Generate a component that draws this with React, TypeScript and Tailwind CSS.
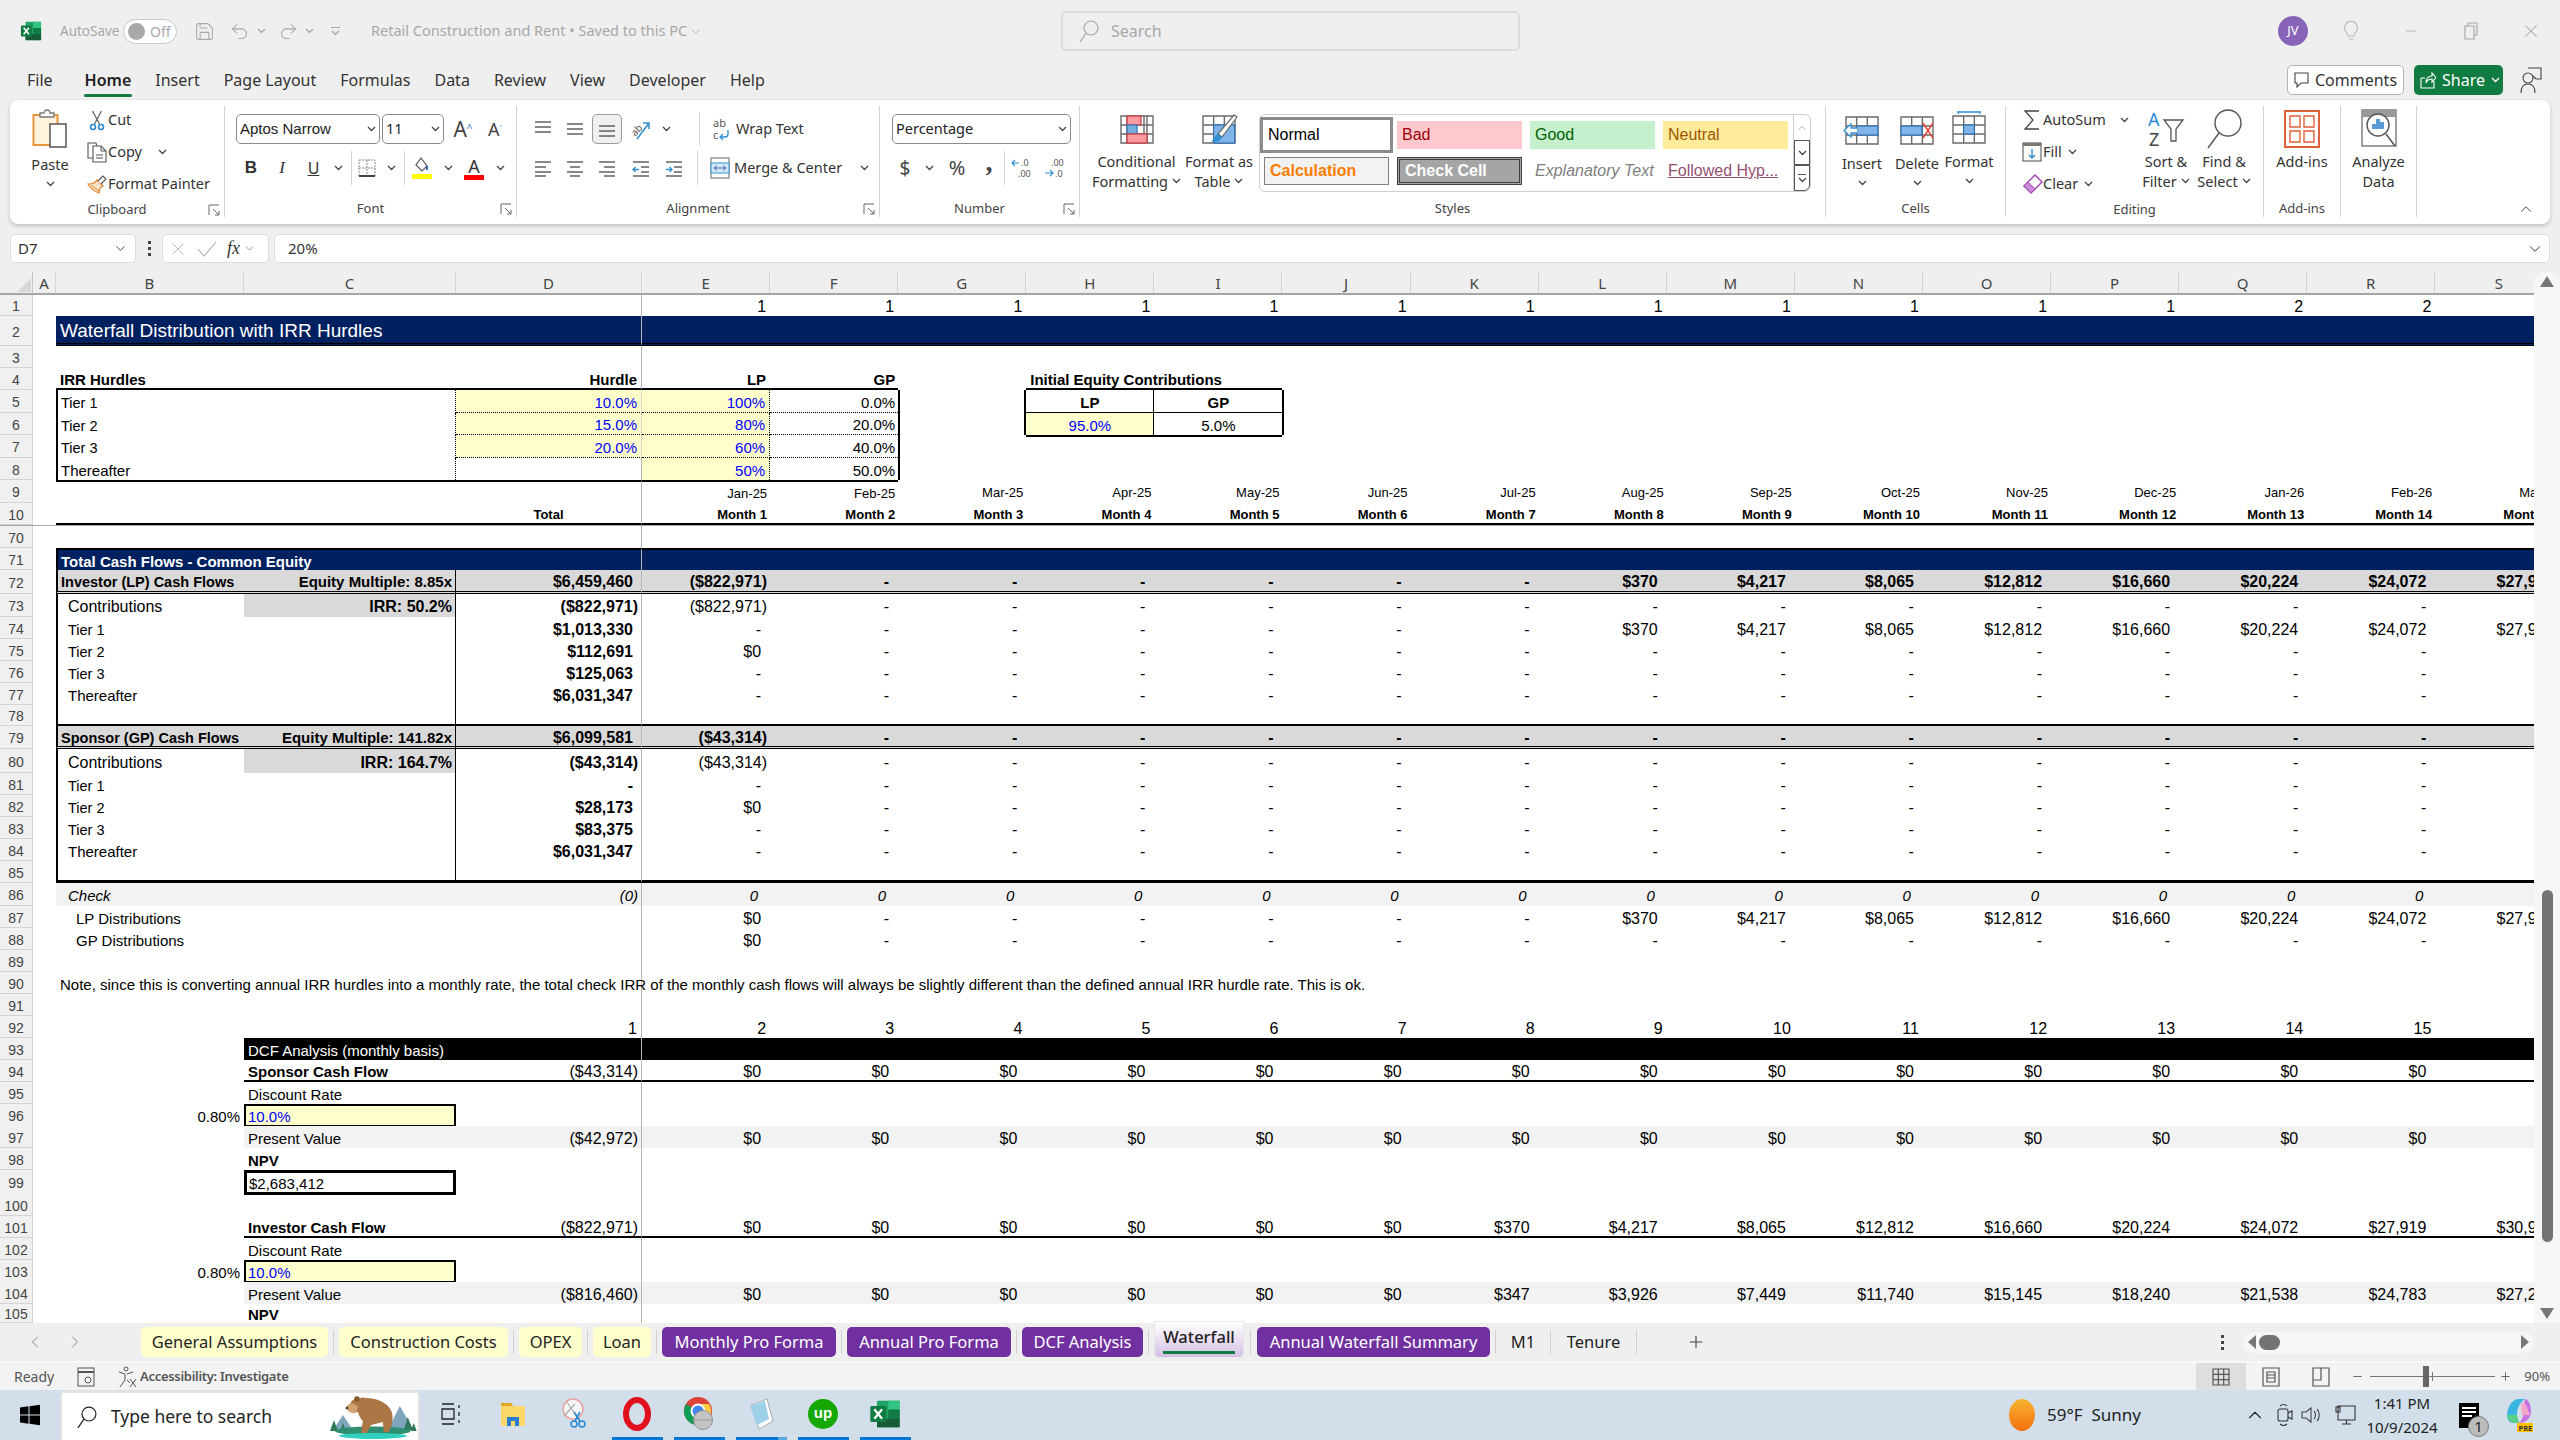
import type { ReactNode } from 'react';
import clsx from 'clsx';
import { ChevronDown, ChevronLeft, ChevronRight, ChevronUp, Minus, Plus, Redo2, Save, Undo2, X } from 'lucide-react';

const COLS = ['A', 'B', 'C', 'D', 'E', 'F', 'G', 'H', 'I', 'J', 'K', 'L', 'M', 'N', 'O', 'P', 'Q', 'R', 'S'] as const;
type Col = (typeof COLS)[number];
type Cell = { t?: string; c?: string };
type Cells = Partial<Record<Col, Cell>>;
type Row = { n: string; h: string; cells: Cells; wrap?: string };

const GRID = 'grid grid-cols-[33px_23px_188px_212px_186px_repeat(15,128.1px)]';

const across = (from: Col, c: string, to: Col = 'S'): Cells => {
    const out: Cells = {};
    COLS.slice(COLS.indexOf(from), COLS.indexOf(to) + 1).forEach((k) => { out[k] = { c }; });
    return out;
};
const vals = (from: Col, values: string[], c: string): Cells => {
    const out: Cells = {};
    values.forEach((t, i) => { out[COLS[COLS.indexOf(from) + i]] = { t, c }; });
    return out;
};
const merge = (...parts: Cells[]): Cells => {
    const out: Cells = {};
    parts.forEach((p) => {
        (Object.keys(p) as Col[]).forEach((k) => {
            out[k] = { t: p[k]?.t ?? out[k]?.t, c: `${out[k]?.c ?? ''} ${p[k]?.c ?? ''}` };
        });
    });
    return out;
};
const rep = (n: number, t: string) => Array.from({ length: n }, () => t);

const NUM = 'justify-end pr-[9px]';
const PAREN = 'justify-end pr-[3px]';
const TOT = 'justify-end pr-[8px] font-bold';
const HIGH = 'bg-[#ffffcc] text-[#0000ff]';
const BOXED = { B: { c: 'border-l-2 border-black' }, C: { c: 'border-r border-black' } };

const months = ['Jan-25', 'Feb-25', 'Mar-25', 'Apr-25', 'May-25', 'Jun-25', 'Jul-25', 'Aug-25', 'Sep-25', 'Oct-25', 'Nov-25', 'Dec-25', 'Jan-26', 'Feb-26', 'Mar-26'];
const monthNames = Array.from({ length: 15 }, (_, i) => `Month ${i + 1}`);
const paid = ['$370', '$4,217', '$8,065', '$12,812', '$16,660', '$20,224', '$24,072', '$27,919'];

const labelSize = (label: string) => {
    if (label === 'Contributions') return 'text-[16px]';
    if (label.startsWith('Tier')) return 'text-[14.5px]';
    return 'text-[15px]';
};

const hurdle = (n: string, h: string, label: string, d: string, e: string, f: string, last = false): Row => ({
    n, h,
    cells: merge(
        { B: { t: label, c: `border-l-2 border-black pl-[3px] ${labelSize(label)}` } },
        { C: { c: 'border-r border-dotted border-black' } },
        { D: { t: d, c: `justify-end pr-[4px] text-[15px] ${d ? HIGH : ''} ${last ? '' : 'border-b border-dotted border-black'}` } },
        { E: { t: e, c: `justify-end pr-[4px] text-[15px] border-r border-dotted border-black ${HIGH} ${last ? '' : 'border-b'}` } },
        { F: { t: f, c: `justify-end pr-[3px] text-[15px] ${last ? '' : 'border-b border-dotted border-black'}` } },
        { G: { c: 'border-l-2 border-black' } },
    ),
});

const flowRow = (n: string, h: string, label: string, total: string, e: string, rest: string[] = [], paren = false, extra: Cells = {}): Row => ({
    n, h,
    cells: merge(
        BOXED,
        { B: { t: label, c: `pl-[10px] z-10 ${labelSize(label)}` } },
        { D: { t: total, c: paren ? `${PAREN} font-bold` : TOT } },
        { E: { t: e, c: e.startsWith('(') ? PAREN : NUM } },
        vals('F', rest.length ? rest : rep(14, '-'), NUM),
        extra,
    ),
});

const headRow = (n: string, h: string, label: string, multiple: string, total: string, e: string, rest: string[]): Row => ({
    n, h,
    cells: merge(
        across('B', 'bg-[#d9d9d9] font-bold border-b-[3px] border-double border-black'),
        { B: { t: label, c: 'border-l-2 text-[14.5px] pl-[3px] z-10' } },
        { C: { t: multiple, c: 'justify-end pr-[3px] text-[15px] border-r' } },
        { D: { t: total, c: 'justify-end pr-[8px]' } },
        { E: { t: e, c: PAREN } },
        vals('F', rest, NUM),
    ),
});

const ROWS: Row[] = [
    { n: '1', h: 'h-[21px]', cells: vals('E', [...rep(12, '1'), '2', '2', '2'], 'justify-end pr-[4px]') },
    { n: '2', h: 'h-[30px]', cells: merge(across('B', 'bg-[#002060] border-b-[3px] border-double border-black'), { B: { t: 'Waterfall Distribution with IRR Hurdles', c: 'text-white text-[19px] pl-[4px] z-10' } }) },
    { n: '3', h: 'h-[22px]', cells: {} },
    {
        n: '4', h: 'h-[22px]', cells: merge(
            across('B', 'border-b-2 border-black', 'F'),
            across('H', 'border-b-2 border-black', 'I'),
            { B: { t: 'IRR Hurdles', c: 'font-bold text-[15px] pl-[4px] z-10' } },
            { D: { t: 'Hurdle', c: 'justify-end pr-[4px] font-bold text-[15px]' } },
            { E: { t: 'LP', c: 'justify-end pr-[4px] font-bold text-[15px]' } },
            { F: { t: 'GP', c: 'justify-end pr-[3px] font-bold text-[15px]' } },
            { H: { t: 'Initial Equity Contributions', c: 'font-bold text-[15px] pl-[4px] z-10' } },
        ),
    },
    (() => {
        const r = hurdle('5', 'h-[23px]', 'Tier 1', '10.0%', '100%', '0.0%');
        r.cells = merge(r.cells, { G: { c: 'border-r-2' } }, {
            H: { t: 'LP', c: 'justify-center font-bold text-[15px] border-r border-b border-black' },
            I: { t: 'GP', c: 'justify-center font-bold text-[15px] border-b border-black' },
            J: { c: 'border-l-2 border-black' },
        });
        return r;
    })(),
    (() => {
        const r = hurdle('6', 'h-[22px]', 'Tier 2', '15.0%', '80%', '20.0%');
        r.cells = merge(r.cells, { G: { c: 'border-r-2' } }, {
            H: { t: '95.0%', c: `justify-center text-[15px] border-r border-black ${HIGH}` },
            I: { t: '5.0%', c: 'justify-center text-[15px]' },
            J: { c: 'border-l-2 border-black' },
        });
        return r;
    })(),
    (() => {
        const r = hurdle('7', 'h-[23px]', 'Tier 3', '20.0%', '60%', '40.0%');
        r.cells = merge(r.cells, across('H', 'border-t-2 border-black', 'I'));
        return r;
    })(),
    hurdle('8', 'h-[22px]', 'Thereafter', '', '50%', '50.0%', true),
    { n: '9', h: 'h-[23px]', cells: merge(across('B', 'border-t-2 border-black', 'F'), vals('E', months, 'justify-end pr-[3px] text-[13px]')) },
    {
        n: '10', h: 'h-[22px]', cells: merge(
            across('B', 'border-b-2 border-black'),
            { D: { t: 'Total', c: 'justify-center font-bold text-[13px]' } },
            vals('E', monthNames, 'justify-end pr-[3px] font-bold text-[13px]'),
        ),
    },
    { n: '70', h: 'h-[23px]', wrap: 'border-t border-[#a8a8a8]', cells: {} },
    { n: '71', h: 'h-[22px]', cells: merge(across('B', 'bg-[#002060] border-t-2 border-black'), { B: { t: 'Total Cash Flows - Common Equity', c: 'border-l-2 text-white font-bold text-[15px] pl-[3px] z-10' } }) },
    headRow('72', 'h-[24px]', 'Investor (LP) Cash Flows', 'Equity Multiple: 8.85x', '$6,459,460', '($822,971)', [...rep(6, '-'), ...paid]),
    flowRow('73', 'h-[23px]', 'Contributions', '($822,971)', '($822,971)', [], true, { C: { t: 'IRR: 50.2%', c: 'bg-[#d9d9d9] justify-end pr-[3px] font-bold' } }),
    flowRow('74', 'h-[22px]', 'Tier 1', '$1,013,330', '-', [...rep(6, '-'), ...paid]),
    flowRow('75', 'h-[22px]', 'Tier 2', '$112,691', '$0'),
    flowRow('76', 'h-[22px]', 'Tier 3', '$125,063', '-'),
    flowRow('77', 'h-[22px]', 'Thereafter', '$6,031,347', '-'),
    { n: '78', h: 'h-[21px]', cells: merge(across('B', 'border-b-2 border-black'), BOXED) },
    headRow('79', 'h-[23px]', 'Sponsor (GP) Cash Flows', 'Equity Multiple: 141.82x', '$6,099,581', '($43,314)', rep(14, '-')),
    flowRow('80', 'h-[24px]', 'Contributions', '($43,314)', '($43,314)', [], true, { C: { t: 'IRR: 164.7%', c: 'bg-[#d9d9d9] justify-end pr-[3px] font-bold' } }),
    flowRow('81', 'h-[22px]', 'Tier 1', '-', '-'),
    flowRow('82', 'h-[22px]', 'Tier 2', '$28,173', '$0'),
    flowRow('83', 'h-[22px]', 'Tier 3', '$83,375', '-'),
    flowRow('84', 'h-[22px]', 'Thereafter', '$6,031,347', '-'),
    { n: '85', h: 'h-[22px]', cells: merge(across('B', 'border-b-[3px] border-black'), BOXED) },
    {
        n: '86', h: 'h-[23px]', cells: merge(
            across('B', 'bg-[#f2f2f2] italic'),
            { B: { t: 'Check', c: 'text-[15px] pl-[12px] z-10' } },
            { D: { t: '(0)', c: 'justify-end pr-[3px] text-[15px]' } },
            vals('E', rep(15, '0'), 'justify-end pr-[12px] text-[15px]'),
        ),
    },
    { n: '87', h: 'h-[22px]', cells: merge({ B: { t: 'LP Distributions', c: 'text-[15px] pl-[20px] z-10' } }, vals('E', ['$0', ...rep(6, '-'), ...paid], NUM)) },
    { n: '88', h: 'h-[22px]', cells: merge({ B: { t: 'GP Distributions', c: 'text-[15px] pl-[20px] z-10' } }, vals('E', ['$0', ...rep(14, '-')], NUM)) },
    { n: '89', h: 'h-[22px]', cells: {} },
    { n: '90', h: 'h-[22px]', cells: { B: { t: 'Note, since this is converting annual IRR hurdles into a monthly rate, the total check IRR of the monthly cash flows will always be slightly different than the defined annual IRR hurdle rate. This is ok.', c: 'text-[15px] pl-[4px] z-10' } } },
    { n: '91', h: 'h-[22px]', cells: {} },
    { n: '92', h: 'h-[22px]', cells: vals('D', Array.from({ length: 16 }, (_, i) => String(i + 1)), 'justify-end pr-[4px]') },
    { n: '93', h: 'h-[22px]', cells: merge(across('C', 'bg-black'), { C: { t: 'DCF Analysis (monthly basis)', c: 'text-white text-[15px] pl-[4px]' } }) },
    {
        n: '94', h: 'h-[22px]', cells: merge(
            across('C', 'border-b-2 border-black'),
            { C: { t: 'Sponsor Cash Flow', c: 'font-bold text-[15px] pl-[4px]' } },
            { D: { t: '($43,314)', c: PAREN } },
            vals('E', rep(15, '$0'), NUM),
        ),
    },
    { n: '95', h: 'h-[22px]', cells: { C: { t: 'Discount Rate', c: 'text-[15px] pl-[4px]' } } },
    { n: '96', h: 'h-[22px]', cells: { B: { t: '0.80%', c: 'justify-end pr-[4px] text-[15px]' }, C: { t: '10.0%', c: `text-[15px] pl-[2px] border-2 border-black ${HIGH}` } } },
    {
        n: '97', h: 'h-[22px]', cells: merge(
            across('C', 'bg-[#f2f2f2]'),
            { C: { t: 'Present Value', c: 'text-[15px] pl-[4px]' } },
            { D: { t: '($42,972)', c: PAREN } },
            vals('E', rep(15, '$0'), NUM),
        ),
    },
    { n: '98', h: 'h-[22px]', cells: { C: { t: 'NPV', c: 'font-bold text-[15px] pl-[4px]' } } },
    { n: '99', h: 'h-[24px]', cells: { C: { t: '$2,683,412', c: 'text-[15px] pl-[2px] border-[3px] border-black' } } },
    { n: '100', h: 'h-[22px]', cells: {} },
    {
        n: '101', h: 'h-[22px]', cells: merge(
            across('C', 'border-b-2 border-black'),
            { C: { t: 'Investor Cash Flow', c: 'font-bold text-[15px] pl-[4px]' } },
            { D: { t: '($822,971)', c: PAREN } },
            vals('E', [...rep(6, '$0'), ...paid, '$30,978'], NUM),
        ),
    },
    { n: '102', h: 'h-[22px]', cells: { C: { t: 'Discount Rate', c: 'text-[15px] pl-[4px]' } } },
    { n: '103', h: 'h-[22px]', cells: { B: { t: '0.80%', c: 'justify-end pr-[4px] text-[15px]' }, C: { t: '10.0%', c: `text-[15px] pl-[2px] border-2 border-black ${HIGH}` } } },
    {
        n: '104', h: 'h-[22px]', cells: merge(
            across('C', 'bg-[#f2f2f2]'),
            { C: { t: 'Present Value', c: 'text-[15px] pl-[4px]' } },
            { D: { t: '($816,460)', c: PAREN } },
            vals('E', [...rep(6, '$0'), '$347', '$3,926', '$7,449', '$11,740', '$15,145', '$18,240', '$21,538', '$24,783', '$27,243'], NUM),
        ),
    },
    { n: '105', h: 'h-[19px]', cells: { C: { t: 'NPV', c: 'font-bold text-[15px] pl-[4px]' } } },
];

/* ---------- small drawings ---------- */

function ExcelLogo({ size = 22 }: { size?: number }) {
    return (
        <svg width={size} height={size} viewBox="0 0 24 24">
            <rect x="6" y="2" width="17" height="20" rx="1" fill="#21a366" />
            <rect x="14.5" y="2" width="8.5" height="6.700" fill="#33c481" />
            <rect x="14.5" y="8.700" width="8.5" height="6.700" fill="#107c41" />
            <rect x="6" y="15.400" width="17" height="6.600" fill="#185c37" />
            <rect x="1" y="6" width="12" height="12" rx="1" fill="#107c41" />
            <path d="M4 8.500l5.800 7M9.800 8.500l-5.800 7" stroke="#fff" strokeWidth="1.700" />
        </svg>
    );
}

function Chev({ className = 'text-[#444]' }: { className?: string }) {
    return (
        <svg width="9" height="6" viewBox="0 0 9 6" className={className}>
            <path d="M1 1l3.500 3.500L8 1" fill="none" stroke="currentColor" strokeWidth="1.300" />
        </svg>
    );
}

function Lines({ lines, accent }: { lines: [number, number, number][]; accent?: ReactNode }) {
    return (
        <svg width="20" height="20" viewBox="0 0 20 20">
            {lines.map(([a, b, y]) => <path key={y} d={`M${a} ${y}H${b}`} stroke="#555" strokeWidth="1.400" />)}
            {accent}
        </svg>
    );
}

function TableGrid({ fills = [], extra, cols = [14.67, 25.33] }: { fills?: [number, number, number, number, string, string?][]; extra?: ReactNode; cols?: number[] }) {
    return (
        <svg width="40" height="36" viewBox="0 0 40 36">
            <rect x="4" y="5" width="32" height="27" fill="#fff" />
            <path d={`M4 5h32v27H4z${cols.map((x) => `M${x} 5v27`).join('')}M4 14h32M4 23h32`} fill="none" stroke="#6a6a6a" strokeWidth="1.400" />
            {fills.map(([x, y, w, h, f, s]) => <rect key={`${x}-${y}`} x={x} y={y} width={w} height={h} fill={f} stroke={s} strokeWidth="1.200" />)}
            {extra}
        </svg>
    );
}

function Bear() {
    return (
        <svg width="90" height="46" viewBox="0 0 90 46">
            <path d="M5 36l10-15 10 15zM60 36l12-24 14 24z" fill="#7fa6bd" />
            <path d="M2 37l4-11 4 11zM12 37l3-8 3 8zM76 36l4-13 5 13zM83 37l3-8 3 8z" fill="#2e7a5a" />
            <ellipse cx="45" cy="37" rx="38" ry="4.500" fill="#2f8f72" />
            <ellipse cx="45" cy="42" rx="34" ry="3" fill="#2fd0bf" />
            <path d="M22 11c1-5 5-7 9-6 2-2 5-2 7-1 10 0 22 4 26 14 1 4 1 9 0 13l-3 7h-5l-1-10-12 3-4 8h-6l2-12c-3-3-4-6-5-9-3 0-7-2-8-7z" fill="#ad7645" />
            <path d="M18 14c1-3 3-4 6-5l6 3-2 7c-4 1-8-1-10-5z" fill="#d0a273" />
            <circle cx="29" cy="5" r="2.800" fill="#8a5a31" />
            <circle cx="19" cy="14" r="1.300" fill="#333" />
        </svg>
    );
}

/* ---------- ribbon pieces ---------- */

function Slot({ w, children }: { w: string; children?: ReactNode }) {
    return <div className={clsx('flex items-center justify-center h-[30px]', w)}>{children}</div>;
}

function Big({ icon, lines, chev = true, w, drop }: { icon: ReactNode; lines: string[]; chev?: boolean; w: string; drop?: boolean }) {
    return (
        <div className={clsx('flex flex-col items-center shrink-0 text-[14.5px] leading-[20px] text-[#333]', w)}>
            <div className={clsx('mt-[1px] flex items-center justify-center', drop ? 'h-[46px]' : 'h-[44px]')}>{icon}</div>
            {lines.map((l, i) => (
                <div key={l} className="flex items-center gap-[4px] whitespace-nowrap">
                    {l}
                    {chev && i === lines.length - 1 && lines.length > 1 && <Chev />}
                </div>
            ))}
            {chev && lines.length === 1 && <div className="h-[20px] flex items-center"><Chev /></div>}
        </div>
    );
}

function Group({ w, label, launcher, children }: { w: string; label?: string; launcher?: boolean; children: ReactNode }) {
    return (
        <div className={clsx('h-[111px] mt-[6px] shrink-0 border-r border-[#d5d5d5] flex flex-col', w)}>
            <div className="h-[97px] flex">{children}</div>
            <div className="h-[18px] grid grid-cols-[1fr_auto_1fr] items-center text-[13px] text-[#444]">
                <span />
                <span>{label}</span>
                {launcher && (
                    <svg width="12" height="12" viewBox="0 0 12 12" className="justify-self-end mr-[4px]">
                        <path d="M1 11V1h10M5 5l6 6M11 7v4H7" fill="none" stroke="#666" strokeWidth="1" />
                    </svg>
                )}
            </div>
        </div>
    );
}

function Small({ icon, text, chev, gap = 'ml-[9px]' }: { icon: ReactNode; text: string; chev?: boolean; gap?: string }) {
    return (
        <div className="flex items-center h-[32px] text-[14.5px] text-[#333] whitespace-nowrap">
            <span className="w-[22px] flex justify-center">{icon}</span>
            <span>{text}</span>
            {chev && <span className={gap}><Chev /></span>}
        </div>
    );
}

function Sep({ className }: { className?: string }) {
    return <span className={clsx('w-px h-[34px] bg-[#d5d5d5] shrink-0', className)} />;
}

function StyleBox({ children, c }: { children: ReactNode; c: string }) {
    return <div className={clsx('flex items-center pl-[5px] shrink-0 text-[16px] font-[Liberation_Sans,Arial,sans-serif]', c)}>{children}</div>;
}

function Ribbon() {
    return (
        <div className="mx-[10px] h-[124px] rounded-[8px] bg-white shadow-[0_2px_4px_rgba(0,0,0,0.2)] flex">
            <Group w="w-[215px]" label="Clipboard" launcher>
                <div className="ml-[10px] w-[60px] flex flex-col items-center text-[14.5px] text-[#333]">
                    <svg width="36" height="40" viewBox="0 0 36 40" className="mt-[3px]">
                        <rect x="1.500" y="6" width="24" height="30" fill="#fff3dc" stroke="#e8963a" strokeWidth="2" />
                        <path d="M8 8V4h4a3 3 0 016 0h4v4z" fill="#fff" stroke="#777" strokeWidth="1.300" />
                        <rect x="18" y="15" width="16" height="23" fill="#fff" stroke="#555" strokeWidth="1.500" />
                    </svg>
                    <span className="mt-[5px]">Paste</span>
                    <span className="mt-[5px]"><Chev /></span>
                </div>
                <div className="ml-[6px] -mt-[2px]">
                    <Small text="Cut" icon={<svg width="16" height="21" viewBox="0 0 16 21"><path d="M3.500 1l7 13M12.500 1l-7 13" stroke="#555" strokeWidth="1.100" /><circle cx="4" cy="17" r="2.500" fill="none" stroke="#2b88d8" strokeWidth="1.500" /><circle cx="12" cy="17" r="2.500" fill="none" stroke="#2b88d8" strokeWidth="1.500" /></svg>} />
                    <Small text="Copy" chev gap="ml-[16px]" icon={<svg width="20" height="22" viewBox="0 0 20 22"><path d="M7 17H1V2h8l1 3" fill="#fff" stroke="#555" strokeWidth="1.100" /><path d="M6 5h8l5 5v11H6z" fill="#fff" stroke="#555" strokeWidth="1.100" /><path d="M14 5v5h5M9 14h7M9 17h7" fill="none" stroke="#555" strokeWidth="1" /></svg>} />
                    <Small text="Format Painter" icon={<svg width="21" height="20" viewBox="0 0 21 20"><path d="M1 10c5 0 8-2 9-4l6 6c-2 1-4 4-4 7-4-1-9-5-11-9z" fill="#fbe3c8" stroke="#e8832f" strokeWidth="1.200" /><path d="M11 7l5-5 3 3-5 5" fill="#fff" stroke="#555" strokeWidth="1.100" /><path d="M4 11l8 6" stroke="#e8832f" strokeWidth="1" /></svg>} />
                </div>
            </Group>

            <Group w="w-[292px]" label="Font" launcher>
                <div className="flex flex-col pl-[11px] pt-[8px] gap-[9px]">
                    <div className="flex items-center h-[30px]">
                        <div className="w-[144px] h-[30px] border border-[#8a8a8a] rounded-[5px] flex items-center justify-between px-[3px] text-[15px] text-[#222] font-[Liberation_Sans,Arial,sans-serif]">Aptos Narrow<Chev /></div>
                        <div className="w-[62px] ml-[2px] h-[30px] border border-[#8a8a8a] rounded-[5px] flex items-center justify-between px-[3px] text-[14.5px] text-[#222]">11<Chev /></div>
                        <span className="ml-[6px] w-[26px] text-[21px] leading-none text-[#444] text-center">A<sup className="text-[10px] text-[#2f6fb5]">^</sup></span>
                        <span className="ml-[6px] w-[26px] text-[18px] leading-none text-[#444] text-center">A<sup className="text-[9px] text-[#2f6fb5]">˅</sup></span>
                    </div>
                    <div className="flex items-center h-[30px] text-[#333]">
                        <Slot w="w-[30px]"><b className="text-[17px] font-[Liberation_Sans,sans-serif]">B</b></Slot>
                        <Slot w="w-[32px]"><i className="text-[17px] font-[Liberation_Serif,serif]">I</i></Slot>
                        <Slot w="w-[31px]"><u className="text-[16px]">U</u></Slot>
                        <Slot w="w-[18px]"><Chev /></Slot>
                        <Sep className="ml-[4px]" />
                        <Slot w="w-[30px]">
                            <svg width="20" height="20" viewBox="0 0 20 20"><path d="M2 2h16v16H2zM10 2v16M2 10h16" fill="none" stroke="#888" strokeWidth="1" strokeDasharray="2 1" /><path d="M2 18h16" stroke="#444" strokeWidth="2" /></svg>
                        </Slot>
                        <Slot w="w-[18px]"><Chev /></Slot>
                        <Sep className="ml-[4px]" />
                        <Slot w="w-[34px]">
                            <svg width="22" height="24" viewBox="0 0 22 24"><path d="M10 2l6 8-5 5-6-6z" fill="#fff" stroke="#555" strokeWidth="1.200" /><path d="M16 10v4" stroke="#2f6fb5" strokeWidth="2" /><rect x="1" y="18" width="20" height="5" fill="#ffff00" /></svg>
                        </Slot>
                        <Slot w="w-[18px]"><Chev /></Slot>
                        <Slot w="w-[34px]">
                            <div className="flex flex-col items-center leading-[18px] text-[18px]">A<span className="w-[20px] h-[5px] bg-[#ff0000]" /></div>
                        </Slot>
                        <Slot w="w-[18px]"><Chev /></Slot>
                    </div>
                </div>
            </Group>

            <Group w="w-[363px]" label="Alignment" launcher>
                <div className="flex flex-col pl-[10px] pt-[8px] gap-[9px]">
                    <div className="flex items-center h-[30px]">
                        <Slot w="w-[32px]"><Lines lines={[[2, 18, 3], [2, 18, 8], [2, 18, 13]]} /></Slot>
                        <Slot w="w-[32px]"><Lines lines={[[2, 18, 5], [2, 18, 10], [2, 18, 15]]} /></Slot>
                        <Slot w="w-[32px]"><span className="w-[30px] h-[30px] rounded-[5px] bg-[#f0f0f0] border border-[#9a9a9a] flex items-center justify-center"><Lines lines={[[2, 18, 7], [2, 18, 12], [2, 18, 17]]} /></span></Slot>
                        <Slot w="w-[35px]">
                            <svg width="24" height="24" viewBox="0 0 24 24" className="overflow-visible"><text x="1" y="16" fontSize="10" fill="#555" transform="rotate(-45 8 12)">ab</text><path d="M8 22L20 6M14 6h6v6" fill="none" stroke="#2f8fd0" strokeWidth="1.500" /></svg>
                        </Slot>
                        <Slot w="w-[16px]"><Chev /></Slot>
                        <Sep className="ml-[25px]" />
                        <div className="ml-[12px] flex items-center text-[14.5px] text-[#333] gap-[4px]">
                            <svg width="20" height="24" viewBox="0 0 20 24" className="overflow-visible"><text x="1" y="10" fontSize="11" fill="#555">ab</text><text x="1" y="22" fontSize="11" fill="#555">c</text><path d="M16 13v4a3 3 0 01-3 3H9m2-3l-3 3 3 3" fill="none" stroke="#2f8fd0" strokeWidth="1.300" /></svg>
                            Wrap Text
                        </div>
                    </div>
                    <div className="flex items-center h-[30px]">
                        <Slot w="w-[32px]"><Lines lines={[[2, 18, 4], [2, 13, 9], [2, 18, 14], [2, 13, 18]]} /></Slot>
                        <Slot w="w-[32px]"><Lines lines={[[2, 18, 4], [5, 15, 9], [2, 18, 14], [5, 15, 18]]} /></Slot>
                        <Slot w="w-[32px]"><Lines lines={[[2, 18, 4], [7, 18, 9], [2, 18, 14], [7, 18, 18]]} /></Slot>
                        <Slot w="w-[35px]"><Lines lines={[[2, 18, 4], [10, 18, 9], [10, 18, 14], [2, 18, 18]]} accent={<path d="M8 11.500H2m2.500-2.500L2 11.500 4.500 14" fill="none" stroke="#2f8fd0" strokeWidth="1.300" />} /></Slot>
                        <Slot w="w-[32px]"><Lines lines={[[2, 18, 4], [10, 18, 9], [10, 18, 14], [2, 18, 18]]} accent={<path d="M2 11.500h6m-2.500-2.500L8 11.500 5.500 14" fill="none" stroke="#2f8fd0" strokeWidth="1.300" />} /></Slot>
                        <Sep className="ml-[7px]" />
                        <div className="ml-[12px] flex items-center text-[14.5px] text-[#333] gap-[4px] whitespace-nowrap">
                            <svg width="20" height="24" viewBox="0 0 20 24"><rect x="1" y="2" width="18" height="20" fill="#fff" stroke="#666" /><rect x="1" y="7" width="18" height="10" fill="#d6e8f7" stroke="#2f8fd0" /><path d="M4 12h12M4 12l3-2.500M4 12l3 2.500M16 12l-3-2.500M16 12l-3 2.500" stroke="#2f6fb5" fill="none" /></svg>
                            Merge &amp; Center
                            <span className="ml-[14px]"><Chev /></span>
                        </div>
                    </div>
                </div>
            </Group>

            <Group w="w-[200px]" label="Number" launcher>
                <div className="flex flex-col pl-[12px] pt-[8px] gap-[9px]">
                    <div className="w-[179px] h-[30px] border border-[#8a8a8a] rounded-[5px] flex items-center justify-between px-[3px] text-[14.5px] text-[#222]">Percentage<Chev /></div>
                    <div className="flex items-center h-[30px] text-[#444]">
                        <Slot w="w-[26px]"><span className="text-[19px]">$</span></Slot>
                        <Slot w="w-[22px]"><Chev /></Slot>
                        <Slot w="w-[34px]"><span className="text-[20px]">%</span></Slot>
                        <Slot w="w-[30px]"><span className="text-[28px] leading-none font-bold font-[Liberation_Serif,serif] -mt-[12px]">,</span></Slot>
                        <Sep />
                        <Slot w="w-[34px]"><svg width="24" height="24" viewBox="0 0 24 24" className="overflow-visible"><text x="11" y="10" fontSize="9" fill="#555">.0</text><text x="8" y="21" fontSize="9" fill="#555">.00</text><path d="M9 7H2m3-3L2 7l3 3" fill="none" stroke="#2f8fd0" strokeWidth="1.200" /></svg></Slot>
                        <Slot w="w-[32px]"><svg width="24" height="24" viewBox="0 0 24 24" className="overflow-visible"><text x="8" y="10" fontSize="9" fill="#555">.00</text><text x="12" y="21" fontSize="9" fill="#555">.0</text><path d="M2 17h8m-3-3l3 3-3 3" fill="none" stroke="#2f8fd0" strokeWidth="1.200" /></svg></Slot>
                    </div>
                </div>
            </Group>

            <Group w="w-[746px]" label="Styles">
                <Big w="w-[81px] ml-[16px]" lines={['Conditional', 'Formatting']} icon={
                    <TableGrid cols={[10, 27, 30]} fills={[[10, 5, 14, 9, '#ff9aa2', '#c8383c'], [10, 14, 10, 9, '#77aee0', '#2f6fb5'], [10, 23, 20, 9, '#ff9aa2', '#c8383c']]} />
                } />
                <Big w="w-[82px] ml-[1px]" lines={['Format as', 'Table']} icon={
                    <TableGrid fills={[[14.670, 14, 21, 18, '#7fb5e8', '#2f6fb5']]} extra={<g><path d="M38 6l-3-2-16 19 4 3z" fill="#fff" stroke="#666" strokeWidth="1.200" /><path d="M19 23c-3 1-3 5-7 7 5 2 10 0 11-4z" fill="#2f8fd0" /></g>} />
                } />
                <div className="ml-[-1px] mt-[8px] w-[552px] h-[78px] border border-[#cfcfcf] rounded-[6px] flex shrink-0">
                    <div className="w-[533px] flex flex-col pt-[2px]">
                        <div className="flex items-center h-[36px]">
                            <StyleBox c="w-[133px] h-[36px] border-[3px] border-[#8b8b8b] outline outline-white -outline-offset-[4px] text-black">Normal</StyleBox>
                            <StyleBox c="ml-[4px] w-[125px] h-[28px] bg-[#ffc7ce] text-[#9c0006]">Bad</StyleBox>
                            <StyleBox c="ml-[8px] w-[125px] h-[28px] bg-[#c6efce] text-[#006100]">Good</StyleBox>
                            <StyleBox c="ml-[8px] w-[125px] h-[28px] bg-[#ffeb9c] text-[#9c5700]">Neutral</StyleBox>
                        </div>
                        <div className="flex items-center h-[28px] mt-[4px]">
                            <StyleBox c="ml-[4px] w-[125px] h-[28px] bg-[#f2f2f2] border border-[#7f7f7f] text-[#fa7d00] font-bold">Calculation</StyleBox>
                            <StyleBox c="ml-[8px] w-[125px] h-[28px] bg-[#a5a5a5] border-[3px] border-double border-[#3f3f3f] text-white font-bold">Check Cell</StyleBox>
                            <StyleBox c="ml-[8px] w-[125px] h-[28px] text-[#7f7f7f] italic">Explanatory Text</StyleBox>
                            <StyleBox c="ml-[8px] w-[125px] h-[28px] text-[#954f72] underline">Followed Hyp...</StyleBox>
                        </div>
                    </div>
                    <div className="flex-1 flex flex-col border-l border-[#cfcfcf] text-[#555]">
                        <div className="h-[25px] flex items-center justify-center"><ChevronUp size={12} className="text-[#aaa]" /></div>
                        <div className="h-[25px] border border-[#555] flex items-center justify-center"><Chev /></div>
                        <div className="flex-1 border border-[#555] rounded-br-[6px] flex flex-col items-center justify-center"><span className="w-[8px] h-px bg-[#555] mb-[2px]" /><Chev /></div>
                    </div>
                </div>
            </Group>

            <Group w="w-[180px]" label="Cells">
                <Big drop w="w-[52px] ml-[10px]" lines={['Insert']} icon={
                    <TableGrid fills={[[14.670, 14, 21.300, 9, '#7fb5e8', '#2f6fb5']]} extra={<path d="M15 16H9v-4l-7 6.500L9 25v-4h6" fill="#fff" stroke="#2f8fd0" strokeWidth="1.300" />} />
                } />
                <Big drop w="w-[52px] ml-[3px]" lines={['Delete']} icon={
                    <TableGrid fills={[[4, 14, 21, 9, '#7fb5e8', '#2f6fb5']]} extra={<path d="M26 11l10 15M36 11L26 26" stroke="#e8483c" strokeWidth="1.500" />} />
                } />
                <Big w="w-[52px]" lines={['Format']} icon={
                    <TableGrid fills={[[14.670, 14, 10.670, 9, '#7fb5e8', '#2f6fb5']]} extra={<path d="M9 1h22M9 0v3M31 0v3" stroke="#2f8fd0" strokeWidth="1.300" />} />
                } />
            </Group>

            <Group w="w-[258px]" label="Editing">
                <div className="ml-[15px] w-[115px] -mt-[2px]">
                    <Small text="AutoSum" chev gap="ml-[14px]" icon={<svg width="18" height="24" viewBox="0 0 18 24"><path d="M16 3H2l8 9-8 9h14" fill="none" stroke="#444" strokeWidth="1.300" /></svg>} />
                    <Small text="Fill" chev gap="ml-[6px]" icon={<svg width="20" height="24" viewBox="0 0 20 24"><rect x="1" y="3" width="18" height="18" fill="#fff" stroke="#666" strokeWidth="1.200" /><rect x="1" y="3" width="18" height="3" fill="#777" /><path d="M10 9v9m-3-3l3 3 3-3" fill="none" stroke="#2f8fd0" strokeWidth="1.400" /></svg>} />
                    <Small text="Clear" chev gap="ml-[6px]" icon={<svg width="21" height="22" viewBox="0 0 21 22"><path d="M13 2l7 7-11 11-7-7z" fill="#fff" stroke="#a24bb3" strokeWidth="1.500" /><path d="M6 9l7 7-4 4-7-7z" fill="#c98ad6" stroke="#a24bb3" /></svg>} />
                </div>
                <Big w="w-[60px]" lines={['Sort &', 'Filter']} icon={
                    <svg width="38" height="40" viewBox="0 0 38 40" className="overflow-visible"><text x="1" y="17" fontSize="18" fill="#2b88d8">A</text><text x="2" y="37" fontSize="18" fill="#444">Z</text><path d="M17 11h19l-7 9v12h-5V20z" fill="none" stroke="#555" strokeWidth="1.300" /></svg>
                } />
                <Big w="w-[56px]" lines={['Find &', 'Select']} icon={<svg width="40" height="42" viewBox="0 0 40 42"><circle cx="24" cy="15" r="13" fill="none" stroke="#555" strokeWidth="1.400" /><path d="M15 25L4 40" stroke="#555" strokeWidth="1.400" /></svg>} />
            </Group>

            <Group w="w-[77px]" label="Add-ins">
                <Big w="w-[76px]" chev={false} lines={['Add-ins']} icon={<svg width="36" height="38" viewBox="0 0 36 38"><rect x="1" y="1" width="34" height="36" fill="none" stroke="#e0603a" strokeWidth="2" /><path d="M6 6h10v11H6zM20 6h10v11H20zM6 21h10v11H6zM20 21h10v11H20z" fill="none" stroke="#e0603a" strokeWidth="1.400" /></svg>} />
            </Group>

            <Group w="w-[76px]">
                <Big w="w-[75px]" chev={false} lines={['Analyze', 'Data']} icon={<svg width="36" height="40" viewBox="0 0 36 40"><rect x="1" y="1" width="34" height="36" fill="#fff" stroke="#777" strokeWidth="1.400" /><rect x="1" y="1" width="34" height="7" fill="#999" /><circle cx="17" cy="16" r="11" fill="#fff" stroke="#555" strokeWidth="1.400" /><path d="M11 20v-5h4v5zM15 20V10h4v10zM19 20v-7h4v7z" fill="#5a9bd5" /><path d="M25 25l9 12" stroke="#555" strokeWidth="1.600" /></svg>} />
            </Group>

            <div className="flex-1 flex items-end justify-end pb-[6px] pr-[15px]"><ChevronUp size={18} strokeWidth={1.300} className="text-[#444]" /></div>
        </div>
    );
}

function TitleBar() {
    return (
        <div className="h-[62px] flex items-center text-[#a8a8a8] text-[14.5px] shrink-0">
            <div className="ml-[20px] w-[40px]"><ExcelLogo /></div>
            <span className="w-[63px] text-[13.5px]">AutoSave</span>
            <div className="w-[54px] h-[25px] rounded-full bg-white border border-[#c8c8c8] flex items-center gap-[5px] pl-[4px] text-[14px]">
                <span className="w-[17px] h-[17px] rounded-full bg-[#a8a8a8]" />
                Off
            </div>
            <Save size={21} strokeWidth={1.200} className="ml-[17px]" />
            <Undo2 size={21} strokeWidth={1.200} className="ml-[14px]" />
            <span className="ml-[7px]"><Chev className="text-[#a8a8a8]" /></span>
            <Redo2 size={21} strokeWidth={1.200} className="ml-[12px]" />
            <span className="ml-[6px]"><Chev className="text-[#a8a8a8]" /></span>
            <span className="ml-[17px] flex flex-col items-center gap-[2px]"><span className="w-[9px] h-px bg-[#a8a8a8]" /><Chev className="text-[#a8a8a8]" /></span>
            <span className="ml-[31px] w-[314px] whitespace-nowrap">Retail Construction and Rent  •  Saved to this PC</span>
            <ChevronDown size={15} strokeWidth={1.300} className="ml-[3px]" />
            <div className="ml-[358px] w-[459px] h-[40px] rounded-[5px] border-2 border-[#dcdcdc] flex items-center pl-[16px] gap-[12px] text-[16px]">
                <svg width="20" height="24" viewBox="0 0 20 24"><circle cx="12" cy="9" r="7" fill="none" stroke="#a8a8a8" strokeWidth="1.200" /><path d="M7 14l-6 9" stroke="#a8a8a8" strokeWidth="1.200" /></svg>
                Search
            </div>
            <div className="ml-[758px] w-[30px] h-[30px] rounded-full bg-[#8764b8] text-white text-[13px] flex items-center justify-center">JV</div>
            <svg width="16" height="24" viewBox="0 0 16 24" className="ml-[35px]"><path d="M4 14a6.500 6.500 0 118 0l-1 3H5zM6 20h4" fill="none" stroke="#bbb" strokeWidth="1.200" /></svg>
            <Minus size={16} strokeWidth={1.200} className="ml-[44px]" />
            <svg width="14" height="18" viewBox="0 0 14 18" className="ml-[45px]"><path d="M1 4h9v13H1zM4 4V1h9v12h-3" fill="none" stroke="#a8a8a8" strokeWidth="1.200" /></svg>
            <X size={22} strokeWidth={1.100} className="ml-[42px]" />
        </div>
    );
}

function TabRow() {
    const tabs = ['Insert', 'Page Layout', 'Formulas', 'Data', 'Review', 'View', 'Developer', 'Help'];
    return (
        <div className="h-[38px] flex text-[16px] text-[#333] shrink-0">
            <div className="ml-[27px] h-[36px] flex items-center">File</div>
            <div className="ml-[32px] h-[36px] flex flex-col items-center justify-center relative font-semibold text-[#222]">
                Home
                <span className="absolute bottom-[1px] w-[48px] h-[3px] rounded-full bg-[#107c41]" />
            </div>
            {tabs.map((t) => <div key={t} className="ml-[24px] h-[36px] flex items-center">{t}</div>)}
            <div className="flex-1" />
            <div className="mt-[3px] w-[117px] h-[30px] rounded-[5px] bg-white border border-[#b5b5b5] flex items-center gap-[6px] pl-[6px] shrink-0">
                <svg width="15" height="18" viewBox="0 0 15 18"><path d="M1 2h13v10H7l-4 4v-4H1z" fill="none" stroke="#444" strokeWidth="1.100" /></svg>
                Comments
            </div>
            <div className="mt-[3px] ml-[10px] w-[89px] h-[30px] rounded-[5px] bg-[#107c41] text-white flex items-center gap-[6px] pl-[6px] shrink-0">
                <svg width="16" height="18" viewBox="0 0 16 18"><path d="M1 7h4M1 7v10h13v-7M6 12c0-5 3-7 6-7V2l4 4.500-4 4.500V8c-2 0-5 1-6 4z" fill="none" stroke="#fff" strokeWidth="1.100" /></svg>
                Share
                <Chev className="text-white" />
            </div>
            <svg width="22" height="32" viewBox="0 0 22 32" className="ml-[17px] mr-[18px] mt-[2px] shrink-0"><circle cx="8" cy="14" r="5" fill="none" stroke="#444" strokeWidth="1.100" /><path d="M1 29c0-6 3-9 7-9s7 3 7 9M8 4h13v11h-5l-3-3" fill="none" stroke="#444" strokeWidth="1.100" /></svg>
        </div>
    );
}

function FormulaBar() {
    return (
        <div className="mx-[10px] mt-[10px] h-[29px] flex items-center text-[15px] text-[#333] shrink-0">
            <div className="w-[126px] h-[29px] bg-white rounded-[5px] border border-[#dcdcdc] flex items-center justify-between px-[7px]">D7<ChevronDown size={15} strokeWidth={1.400} /></div>
            <div className="w-[26px] flex flex-col items-center gap-[3px]">
                <span className="w-[3px] h-[3px] bg-[#444]" /><span className="w-[3px] h-[3px] bg-[#444]" /><span className="w-[3px] h-[3px] bg-[#444]" />
            </div>
            <div className="w-[107px] h-[29px] bg-white rounded-[5px] border border-[#dcdcdc] flex items-center pl-[5px] text-[#aaa]">
                <X size={20} strokeWidth={1} />
                <svg width="22" height="18" viewBox="0 0 22 18" className="ml-[8px]"><path d="M2 9l6 7L20 2" fill="none" stroke="#aaa" strokeWidth="1.100" /></svg>
                <i className="ml-[9px] text-[18px] text-[#333] font-[Liberation_Serif,serif]">fx</i>
                <ChevronDown size={13} strokeWidth={1.200} className="ml-[3px] text-[#666]" />
            </div>
            <div className="ml-[5px] flex-1 h-[29px] bg-white rounded-[5px] border border-[#dcdcdc] flex items-center justify-between pl-[13px] pr-[5px]">
                20%
                <ChevronDown size={18} strokeWidth={1.300} />
            </div>
        </div>
    );
}

function Sheet() {
    return (
        <div className="flex shrink-0 mt-[9px]">
            <div className="w-[2534px] overflow-hidden bg-white font-[Liberation_Sans,Arial,sans-serif] text-black text-[16px] leading-[16px]">
                <div className={clsx(GRID, 'h-[23px] bg-[#efefef] border-b-2 border-[#a6a6a6] text-[15px] text-[#444] font-[Noto_Sans,sans-serif]')}>
                    <div className="flex items-end justify-end border-r border-[#c8c8c8]">
                        <svg width="16" height="16" viewBox="0 0 16 16"><path d="M15 1v14H1z" fill="#d8d8d8" /></svg>
                    </div>
                    {COLS.map((c) => <div key={c} className="flex items-center justify-center border-r border-[#d4d4d4]">{c}</div>)}
                </div>
                <div className="h-[1028px] overflow-hidden">
                    {ROWS.map((r) => (
                        <div key={r.n} className={clsx(GRID, r.h, r.wrap)}>
                            <div className="flex items-center justify-center pt-[2px] bg-[#f0f0f0] border-b border-r border-[#d4d4d4] text-[14px] text-[#444]">{r.n}</div>
                            {COLS.map((col) => {
                                const cell = r.cells[col];
                                return (
                                    <div key={col} className={clsx('flex items-center whitespace-nowrap pt-[3px]', col === 'D' && 'border-r border-r-[#b5b5b5]', cell?.c)}>
                                        {cell?.t}
                                    </div>
                                );
                            })}
                        </div>
                    ))}
                </div>
            </div>
            <div className="flex-1 flex flex-col items-center bg-[#f6f6f6] rounded-t-[10px]">
                <span className="mt-[4px] w-0 h-0 border-x-[7px] border-x-transparent border-b-[11px] border-b-[#777]" />
                <div className="flex-1 w-full flex flex-col items-center">
                    <div className="mt-[603px] w-[11px] h-[352px] rounded-full bg-[#737373]" />
                </div>
                <span className="mb-[4px] w-0 h-0 border-x-[7px] border-x-transparent border-t-[11px] border-t-[#777]" />
            </div>
        </div>
    );
}

const SHEETS = [
    { t: 'General Assumptions', c: 'w-[187px] bg-[#ffffcc] text-[#222]' },
    { t: 'Construction Costs', c: 'w-[169px] bg-[#ffffcc] text-[#222]' },
    { t: 'OPEX', c: 'w-[63px] bg-[#ffffcc] text-[#222]' },
    { t: 'Loan', c: 'w-[58px] bg-[#ffffcc] text-[#222]' },
    { t: 'Monthly Pro Forma', c: 'w-[174px] bg-[#7030a0] text-white' },
    { t: 'Annual Pro Forma', c: 'w-[164px] bg-[#7030a0] text-white' },
    { t: 'DCF Analysis', c: 'w-[121px] bg-[#7030a0] text-white' },
];

function SheetTabs() {
    return (
        <div className="h-[40px] flex items-center bg-[#efefef] border-b-2 border-[#f8f8f8] text-[16.500px] shrink-0 pr-[26px]">
            <div className="w-[141px] pl-[25px] flex gap-[20px] text-[#888] shrink-0">
                <ChevronLeft size={20} strokeWidth={1.200} />
                <ChevronRight size={20} strokeWidth={1.200} />
            </div>
            {SHEETS.map((s) => (
                <div key={s.t} className="flex items-center shrink-0">
                    <div className={clsx('h-[30px] rounded-[5px] flex items-center justify-center whitespace-nowrap', s.c)}>{s.t}</div>
                    <span className="w-px h-[24px] bg-[#d0d0d0] mx-[5px]" />
                </div>
            ))}
            <div className="w-[90px] h-[37px] -mt-[5px] rounded-b-[5px] bg-gradient-to-b from-white to-[#d5c0e5] flex flex-col items-center justify-end pb-[3px] font-medium text-[#222] shrink-0 border border-[#e8e8e8]">
                Waterfall
                <span className="mt-[1px] w-[72px] h-[3px] bg-[#107c41]" />
            </div>
            <span className="w-px h-[24px] bg-[#d0d0d0] mx-[6px] shrink-0" />
            <div className="w-[233px] h-[30px] rounded-[5px] bg-[#7030a0] text-white flex items-center justify-center shrink-0">Annual Waterfall Summary</div>
            <span className="w-px h-[24px] bg-[#d0d0d0] ml-[5px]" />
            <div className="w-[54px] text-center text-[#222]">M1</div>
            <span className="w-px h-[24px] bg-[#d0d0d0]" />
            <div className="w-[85px] text-center text-[#222]">Tenure</div>
            <span className="w-px h-[24px] bg-[#d0d0d0]" />
            <Plus size={20} strokeWidth={1.300} className="ml-[49px] text-[#444]" />
            <div className="flex-1" />
            <div className="flex flex-col gap-[3px] mr-[19px]">
                <span className="w-[3px] h-[3px] bg-[#444]" /><span className="w-[3px] h-[3px] bg-[#444]" /><span className="w-[3px] h-[3px] bg-[#444]" />
            </div>
            <div className="w-[291px] h-[21px] rounded-full bg-[#f6f6f6] flex items-center pl-[5px] pr-[5px] shrink-0">
                <span className="w-0 h-0 border-y-[7px] border-y-transparent border-r-[8px] border-r-[#777]" />
                <span className="ml-[3px] w-[21px] h-[15px] rounded-full bg-[#737373]" />
                <div className="flex-1" />
                <span className="w-0 h-0 border-y-[7px] border-y-transparent border-l-[8px] border-l-[#777]" />
            </div>
        </div>
    );
}

function StatusBar() {
    return (
        <div className="h-[27px] bg-[#f3f3f3] flex items-center text-[#555] text-[14px] shrink-0">
            <span className="ml-[14px] w-[62px]">Ready</span>
            <svg width="20" height="20" viewBox="0 0 20 20"><rect x="2" y="1" width="16" height="18" fill="none" stroke="#555" /><path d="M2 5h16" stroke="#555" strokeWidth="2" /><circle cx="12" cy="13" r="3" fill="none" stroke="#555" /></svg>
            <svg width="20" height="22" viewBox="0 0 20 22" className="ml-[21px]"><circle cx="9" cy="3" r="2" fill="none" stroke="#555" /><path d="M2 6l6 2v6l-5 7M16 6l-6 2M10 14l3 3M13 13l6 8m0-8l-6 8" fill="none" stroke="#555" /></svg>
            <span className="ml-[3px] text-[13px] font-semibold tracking-[-0.3px] whitespace-nowrap">Accessibility: Investigate</span>
            <div className="flex-1" />
            <div className="w-[50px] h-[27px] bg-[#dedede] flex items-center justify-center">
                <svg width="18" height="18" viewBox="0 0 18 18"><path d="M1 1h16v16H1zM6.300 1v16M11.700 1v16M1 6.300h16M1 11.700h16" fill="none" stroke="#555" strokeWidth="1.200" /></svg>
            </div>
            <div className="w-[50px] flex items-center justify-center">
                <svg width="18" height="20" viewBox="0 0 18 20"><path d="M1 1h16v18H1zM5 5h8v10H5zM5 8h8M5 11h8" fill="none" stroke="#555" strokeWidth="1.200" /></svg>
            </div>
            <div className="w-[50px] flex items-center justify-center">
                <svg width="18" height="20" viewBox="0 0 18 20"><path d="M1 1h16v18H1zM1 13h8V1" fill="none" stroke="#555" strokeWidth="1.200" /></svg>
            </div>
            <Minus size={13} strokeWidth={1.600} className="ml-[5px]" />
            <div className="ml-[6px] w-[125px] h-px bg-[#777] relative shrink-0">
                <span className="absolute left-[53px] -top-[10px] w-[6px] h-[21px] bg-[#666]" />
                <span className="absolute left-[62px] -top-[4px] w-px h-[9px] bg-[#777]" />
            </div>
            <Plus size={13} strokeWidth={1.600} className="ml-[4px]" />
            <span className="ml-[12px] mr-[10px] text-[13px]">90%</span>
        </div>
    );
}

function Dock({ on, lit, children }: { on?: boolean; lit?: boolean; children: ReactNode }) {
    return (
        <div className="w-[62px] h-[50px] flex flex-col items-center shrink-0">
            <div className="flex-1 flex items-center justify-center">{children}</div>
            <span className={clsx('h-[3px] w-[51px]', on ? 'bg-[#0078d4]' : 'bg-transparent', lit && 'border-r-[9px] border-[#5aa7e0]')} />
        </div>
    );
}

function Taskbar() {
    return (
        <div className="flex-1 bg-[#d2dfea] flex items-center text-[#222]">
            <div className="w-[60px] flex justify-center">
                <svg width="22" height="22" viewBox="0 0 22 22" fill="#000"><path d="M1 3.500l8.500-1.200v8.200H1zM10.500 2.200L21 .8v9.700H10.500zM1 11.500h8.500v8.200L1 18.500zM10.500 11.500H21v9.700l-10.500-1.400z" /></svg>
            </div>
            <div className="w-[360px] h-[49px] mt-[1px] bg-white border-2 border-[#e4e4e4] border-b-0 flex items-center pl-[15px] text-[17.500px] shrink-0">
                <svg width="20" height="24" viewBox="0 0 20 24"><circle cx="12" cy="9" r="7" fill="none" stroke="#222" strokeWidth="1.200" /><path d="M7 14l-6 9" stroke="#222" strokeWidth="1.300" /></svg>
                <span className="ml-[14px] w-[218px] whitespace-nowrap">Type here to search</span>
                <Bear />
            </div>
            <Dock><svg width="20" height="24" viewBox="0 0 20 24"><path d="M1 2h12M1 22h12M1 7h12v10H1zM18 3v3M18 10v4M18 18v3" fill="none" stroke="#222" strokeWidth="1.300" /></svg></Dock>
            <Dock><svg width="28" height="26" viewBox="0 0 28 26"><path d="M2 2h10l2 3h12v20H2z" fill="#fcd86a" /><path d="M2 2h10l2 3H2z" fill="#e3a51f" /><path d="M8 25v-9h12v9h-4v-5h-4v5z" fill="#2b7cd3" /></svg></Dock>
            <Dock><svg width="28" height="32" viewBox="0 0 28 32"><circle cx="12" cy="11" r="10" fill="#f6f6f6" stroke="#e8a0a0" strokeWidth="1.500" /><path d="M3 18L14 6M6 4l10 15" stroke="#aaa" strokeWidth="1.200" /><path d="M13 14l6 9m0-9l-5 9" stroke="#2b8ad3" strokeWidth="1.600" /><circle cx="13" cy="26" r="3" fill="none" stroke="#2b8ad3" strokeWidth="1.500" /><circle cx="21" cy="26" r="3" fill="none" stroke="#2b8ad3" strokeWidth="1.500" /></svg></Dock>
            <Dock on><span className="w-[28px] h-[34px] rounded-[50%] border-[6px] border-[#e0101f]" /></Dock>
            <Dock on><svg width="32" height="36" viewBox="0 0 32 36"><circle cx="15" cy="15" r="14" fill="#db4437" /><path d="M15 15L3 8a14 14 0 00-2 7c0 8 6 14 14 14z" fill="#0f9d58" /><path d="M15 15l7 12a14 14 0 006-12c0-3-1-5-2-7H15z" fill="#ffcd40" /><circle cx="15" cy="15" r="6.500" fill="#4285f4" stroke="#fff" strokeWidth="2" /><circle cx="20" cy="24" r="9.500" fill="#c4c4c4" stroke="#8f8f8f" /><path d="M11 24h18" stroke="#999" /></svg></Dock>
            <Dock on lit><svg width="28" height="34" viewBox="0 0 28 34"><path d="M4 8l16-6 6 22-14 8z" fill="#fff" stroke="#aaa" /><path d="M3 9l15-5 4 18-12 6z" fill="#9fd0ea" /></svg></Dock>
            <Dock on><span className="w-[30px] h-[30px] rounded-full bg-[#14a800] flex items-center justify-center text-white text-[15px] font-bold font-[Liberation_Sans,sans-serif]">up</span></Dock>
            <Dock on><ExcelLogo size={32} /></Dock>
            <div className="flex-1" />
            <div className="w-[551px] flex items-center shrink-0">
                <span className="w-[26px] h-[32px] rounded-[50%] bg-gradient-to-b from-[#f4b32e] to-[#f4700f]" />
                <span className="ml-[12px] w-[190px] text-[17px] whitespace-pre">59°F  Sunny</span>
                <div className="w-[36px] flex justify-center"><ChevronUp size={22} strokeWidth={1.200} /></div>
                <div className="w-[24px] flex justify-center">
                    <svg width="16" height="24" viewBox="0 0 16 24"><rect x="1" y="6" width="10" height="12" rx="2" fill="none" stroke="#333" strokeWidth="1.100" /><path d="M11 10l4-2v8l-4-2M3 3c2-2 5-2 7 0M3 21c2 2 5 2 7 0" fill="none" stroke="#333" strokeWidth="1.100" /></svg>
                </div>
                <div className="w-[30px] flex justify-center">
                    <svg width="22" height="22" viewBox="0 0 22 22"><path d="M1 8h4l5-4v14l-5-4H1zM13 7c2 2 2 6 0 8M16 5c3 3 3 9 0 12" fill="none" stroke="#444" strokeWidth="1.100" /></svg>
                </div>
                <div className="w-[36px] flex justify-center">
                    <svg width="22" height="22" viewBox="0 0 22 22"><path d="M4 2h17v14H4zM12.500 16v4M8 20h9M2 3h4v5H2z" fill="none" stroke="#333" strokeWidth="1.100" /></svg>
                </div>
                <div className="w-[78px] flex flex-col items-center text-[15px] leading-[24px]">
                    <span>1:41 PM</span>
                    <span>10/9/2024</span>
                </div>
                <div className="w-[56px] flex justify-center">
                    <div className="relative w-[20px] h-[25px] bg-black flex flex-col gap-[2px] pt-[4px] pl-[3px]">
                        <span className="w-[14px] h-[2px] bg-white" /><span className="w-[14px] h-[2px] bg-white" /><span className="w-[10px] h-[2px] bg-white" />
                        <span className="absolute left-[9px] top-[13px] w-[21px] h-[21px] rounded-full bg-[#bcbcbc] border border-[#777] text-[15px] leading-[19px] text-center text-[#222]">1</span>
                    </div>
                </div>
                <div className="w-[44px] flex justify-center">
                    <svg width="28" height="36" viewBox="0 0 28 36" className="overflow-visible"><path d="M2 18C3 8 8 2 14 2h6c-5 3-8 9-8 16 0 5 1 8 2 8H8c-4 0-6-4-6-8z" fill="#39b5e0" /><path d="M2 18c1 5 4 8 8 8h4l-2-8z" fill="#5bd08a" /><path d="M20 2c4 1 6 6 6 12 0 6-4 12-12 12 4-4 6-10 4-16z" fill="#c774e0" /><path d="M16 6h4l5 12h-8z" fill="#f6a6c8" /><rect x="12" y="26" width="16" height="9" fill="#ffc000" /><text x="13.500" y="33.500" fontSize="7.500" fontWeight="700" fill="#333">PRE</text></svg>
                </div>
            </div>
        </div>
    );
}

export default function App() {
    return (
        <div className="w-[2560px] h-[1440px] overflow-hidden bg-[#efefef] flex flex-col font-['Noto_Sans',sans-serif]">
            <TitleBar />
            <TabRow />
            <Ribbon />
            <FormulaBar />
            <Sheet />
            <SheetTabs />
            <StatusBar />
            <Taskbar />
        </div>
    );
}
